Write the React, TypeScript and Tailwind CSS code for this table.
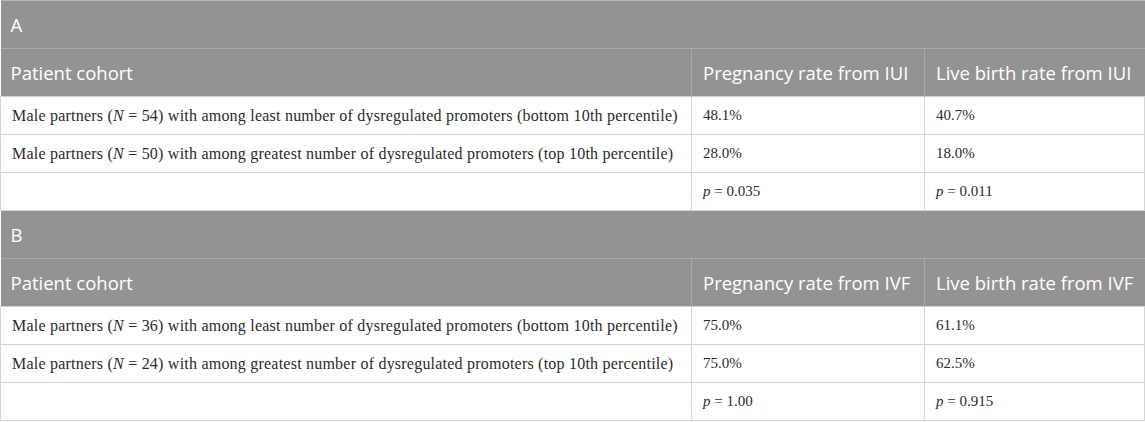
const panels = [
  {
    label: 'A',
    method: 'IUI',
    rows: [
      { n: '54', group: 'least', pct: 'bottom', a: '48.1%', b: '40.7%' },
      { n: '50', group: 'greatest', pct: 'top', a: '28.0%', b: '18.0%' },
    ],
    p: ['0.035', '0.011'],
  },
  {
    label: 'B',
    method: 'IVF',
    rows: [
      { n: '36', group: 'least', pct: 'bottom', a: '75.0%', b: '61.1%' },
      { n: '24', group: 'greatest', pct: 'top', a: '75.0%', b: '62.5%' },
    ],
    p: ['1.00', '0.915'],
  },
];

const head = "bg-[#939393] text-white font-['Open_Sans',sans-serif] text-[18.5px]";
const cell = 'h-[38px] px-[11px] border border-[#d4d4d4] align-middle whitespace-nowrap';

export default function App() {
  return (
    <div className="w-[1145px] bg-white text-[#2b2b2b]">
      <table className="w-[1145px] table-fixed border-collapse border-t border-[#b5b5b5]">
        <colgroup>
          <col className="w-[691px]" />
          <col className="w-[233px]" />
          <col />
        </colgroup>
        {panels.map((panel) => (
          <tbody key={panel.label}>
            <tr className={head}>
              <td colSpan={3} className="h-[48px] px-[10px] border-b border-[#a9a9a9]">
                {panel.label}
              </td>
            </tr>
            <tr className={head}>
              <td className="h-[48px] px-[10px] border-r border-[#a9a9a9]">Patient cohort</td>
              <td className="h-[48px] px-[11px] border-r border-[#a9a9a9]">
                Pregnancy rate from {panel.method}
              </td>
              <td className="h-[48px] px-[11px]">Live birth rate from {panel.method}</td>
            </tr>
            {panel.rows.map((r) => (
              <tr key={r.n} className="font-['Liberation_Serif',serif] text-[15px]">
                <td className={`${cell} text-[16px] tracking-[0.22px]`}>
                  Male partners (<i>N</i> = {r.n}) with among {r.group} number of dysregulated promoters ({r.pct} 10th percentile)
                </td>
                <td className={cell}>{r.a}</td>
                <td className={cell}>{r.b}</td>
              </tr>
            ))}
            <tr className="font-['Liberation_Serif',serif] text-[15px]">
              <td className={cell}></td>
              <td className={cell}>
                <i>p</i> = {panel.p[0]}
              </td>
              <td className={cell}>
                <i>p</i> = {panel.p[1]}
              </td>
            </tr>
          </tbody>
        ))}
      </table>
    </div>
  );
}
